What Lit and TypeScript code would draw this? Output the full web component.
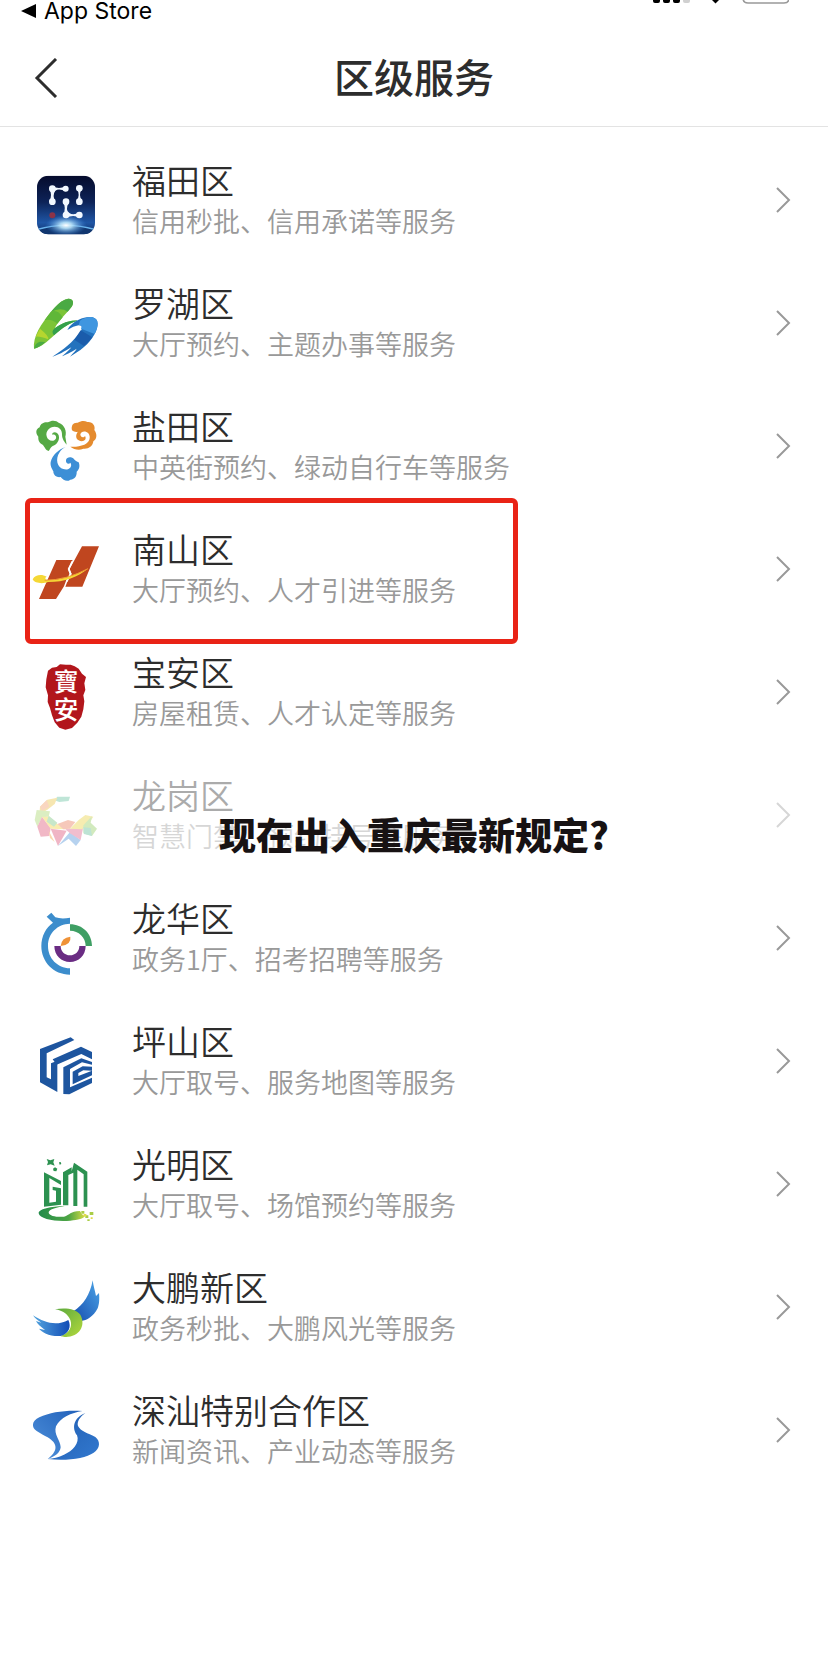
import { LitElement, html, css, svg, nothing } from "lit";
import { customElement, property } from "lit/decorators.js";
import { classMap } from "lit/directives/class-map.js";

interface District {
  name: string;
  detail: string;
  viewBox: string;
  art: unknown;
  marked?: boolean;
  notice?: string;
}

const districts: District[] = [
  {
    name: "福田区",
    detail: "信用秒批、信用承诺等服务",
    viewBox: "39 36 198 198",
    art: svg`
      <defs>
        <linearGradient id="night" x1="0" y1="0" x2="0" y2="1">
          <stop offset="0" stop-color="#050b2c"/><stop offset=".45" stop-color="#0d2358"/>
          <stop offset=".8" stop-color="#1f56a5"/><stop offset="1" stop-color="#0f2f68"/>
        </linearGradient>
        <radialGradient id="glow" cx="138" cy="196" r="62" gradientUnits="userSpaceOnUse" gradientTransform="translate(0 98) scale(1 .5)">
          <stop offset="0" stop-color="#fff"/><stop offset=".3" stop-color="#b8e4fb" stop-opacity=".9"/>
          <stop offset="1" stop-color="#3b8ae0" stop-opacity="0"/>
        </radialGradient>
        <clipPath id="tile"><rect x="51" y="47" width="174" height="176" rx="34"/></clipPath>
      </defs>
      <g clip-path="url(#tile)">
        <rect x="51" y="47" width="174" height="176" fill="url(#night)"/>
        <ellipse cx="138" cy="246" rx="130" ry="50" fill="#11366f"/>
        <path d="M40 212Q138 180 236 212" fill="none" stroke="#69b4ee" stroke-width="4"/>
        <rect x="60" y="150" width="160" height="73" fill="url(#glow)"/>
      </g>
      <g fill="#f2f8ff">
        <circle cx="97" cy="86" r="10"/><circle cx="137" cy="86" r="9"/><circle cx="97" cy="125" r="10"/>
        <circle cx="178" cy="85" r="10"/><circle cx="178" cy="125" r="10"/>
        <circle cx="138" cy="125" r="10"/><circle cx="138" cy="165" r="10"/><circle cx="178" cy="165" r="10"/>
        <path d="M97 78Q117 90 137 78V94Q117 84 106 92Q96 105 106 125H88Q98 105 88 86ZM169 85H187Q173 105 187 125H169Q183 105 169 85ZM129 125H147Q135 150 147 158Q160 168 178 157V173Q158 162 138 175L129 165Q140 145 129 125Z"/>
      </g>
      <circle cx="97" cy="166" r="9" fill="#8c3348"/>`,
  },
  {
    name: "罗湖区",
    detail: "大厅预约、主题办事等服务",
    viewBox: "39 405 198 198",
    art: svg`
      <path d="M42 566C38 530 62 492 96 452C112 434 126 420 142 417C158 414 164 428 155 440C140 459 112 486 104 505C116 498 140 480 172 482C136 494 118 512 100 528C82 544 64 562 42 566Z" fill="#7cc437"/>
      <path d="M92 456C112 434 126 420 142 417C158 414 164 428 155 440L143 455Q122 440 92 456Z" fill="#4aaa43"/>
      <path d="M74 480L92 456Q112 445 128 472L112 491Q96 476 74 480Z" fill="#5fb738"/>
      <path d="M47 530L60 506Q90 530 84 538Q60 528 47 530Z" fill="#b5d62f"/>
      <path d="M42 566Q44 550 60 545L76 546Q60 562 42 566Z" fill="#4aaa43"/>
      <path d="M104 505C116 498 140 480 172 482C136 494 118 512 102 526Q92 516 104 505Z" fill="#33a04c"/>
      <path d="M148 500C166 480 196 467 218 472C238 477 236 500 224 522C207 554 178 574 150 590C160 578 168 572 170 566C150 578 138 584 126 589C140 577 150 568 154 562C134 574 114 586 97 590C130 570 160 544 178 520C190 503 188 494 176 496C164 498 156 502 142 510Z" fill="#2372bd"/>
      <path d="M180 482C194 473 208 469 218 472C238 477 236 500 224 522L183 506Q188 496 176 496Z" fill="#3f96e0"/>
      <path d="M182 511L217 532Q205 548 192 558L163 539Z" fill="#1a5cab"/>`,
  },
  {
    name: "盐田区",
    detail: "中英街预约、绿动自行车等服务",
    viewBox: "39 54 198 198",
    art: svg`
      <path d="M86 153C76 150 74 140 68 134C57 129 54 119 55 110C46 100 47 87 59 82C62 68 76 65 84 67C96 59 110 62 116 68C134 74 141 94 136 110L140 134C134 127 126 116 126 104C127 89 117 80 104 80C88 80 76 94 80 109C83 123 100 127 107 117C112 108 103 101 96 104C98 93 112 95 116 106C121 122 108 136 98 138C92 141 90 148 86 153Z" fill="#55a944"/>
      <path d="M156 91C153 76 159 67 173 68C184 62 194 62 202 66C218 64 227 78 223 90C232 102 231 117 220 124C218 140 204 148 190 146C176 152 162 148 151 140C166 142 180 138 193 134C208 128 214 112 205 100C197 91 183 93 181 103C181 113 192 114 195 108C202 120 188 128 176 121C165 115 168 101 174 95C167 97 162 95 156 91Z" fill="#e58b2e"/>
      <path d="M137 141C116 148 97 165 92 186C90 199 97 207 100 214C100 228 112 233 122 231C130 242 142 246 151 239C166 238 171 225 170 215C179 208 180 196 176 187C171 184 165 182 161 176C156 170 140 169 138 180C136 190 147 195 151 188C159 199 147 211 133 208C110 203 106 176 118 158C123 150 129 145 137 141Z" fill="#3d8fd6"/>`,
  },
  {
    name: "南山区",
    detail: "大厅预约、人才引进等服务",
    viewBox: "39 423 198 198",
    marked: true,
    art: svg`
      <path d="M109 480H158L144 507L149 522L139 540L132 559L108 597H57Z" fill="#c0461f"/>
      <path d="M186 439H237L187 560H136L148 530L155 522L149 507Z" fill="#c0461f"/>
      <path d="M157 484L146 507L152 522L140 545" fill="none" stroke="#fff" stroke-width="5"/>
      <path d="M38 538C46 524 65 522 80 530C72 534 78 540 84 540C135 538 165 524 204 506C174 530 135 546 84 546C70 552 44 551 38 538Z" fill="#f5d836"/>
      <path d="M74 541Q140 540 204 506" fill="none" stroke="#f09a35" stroke-width="3"/>`,
  },
  {
    name: "宝安区",
    detail: "房屋租赁、人才认定等服务",
    viewBox: "39 72 198 198",
    art: svg`
      <path d="M84 92L96 83L110 81L120 73L138 74L152 74L164 79L176 86L186 101L198 111L193 130L196 150L190 166L193 184L190 208L184 230L172 248L156 264L136 269L118 263L104 247L96 226L90 204L83 186L84 166L77 142L79 118Z" fill="#b2161c"/>
      <g class="seal"><text x="138" y="152">寶</text><text x="138" y="236">安</text></g>`,
  },
  {
    name: "龙岗区",
    detail: "智慧门禁、预约挂号等服务",
    viewBox: "39 441 198 198",
    notice: "现在出入重庆最新规定?",
    art: svg`
      <path d="M103 481L112 470L150 470L146 483L118 486Z" fill="#5fbf9b"/>
      <path d="M60 500L82 479L112 473L104 492L84 508L58 524Z" fill="#e8c13c"/>
      <path d="M60 500L80 480L88 500L66 514Z" fill="#ef9a62"/>
      <path d="M44 540L50 510L72 512L90 514L86 530L66 532L52 560Z" fill="#a5d468"/>
      <path d="M52 560L66 530L92 564L88 588L62 590Z" fill="#dc4f72"/>
      <path d="M66 530L88 530L112 552L136 568L92 566Z" fill="#f0cf39"/>
      <path d="M86 527L112 548L102 560L80 545Z" fill="#73c27a"/>
      <path d="M92 566L140 572L114 618Z" fill="#d9486e"/>
      <path d="M86 572L104 606L90 594Z" fill="#f0a03c"/>
      <path d="M114 618L150 576L182 600L168 618L146 596Z" fill="#4a8fd6"/>
      <path d="M136 568L190 560L182 600L150 580Z" fill="#dd5c86"/>
      <path d="M112 552L144 540L166 546L150 566L130 568Z" fill="#e87754"/>
      <path d="M150 566L176 540L196 525L220 530L206 552L186 568Z" fill="#e9cf3e"/>
      <path d="M190 556L216 528L212 548L231 566L216 588L190 580Z" fill="#8fcb5c"/>
      <path d="M190 562L212 564L216 588L192 582Z" fill="#5bb894"/>`,
  },
  {
    name: "龙华区",
    detail: "政务1厅、招考招聘等服务",
    viewBox: "39 60 198 198",
    art: svg`
      <path d="M80 80L94 68L106 82Q125 88 150 83V101C112 102 84 130 84 168C84 205 112 234 150 235V254C100 254 64 215 64 168C64 138 78 112 99 98Z" fill="#3c8dcc"/>
      <path d="M150 103C188 103 216 132 216 168H197C197 142 176 122 150 122Z" fill="#3f9f64"/>
      <path d="M103 168H122C122 184 134 196 150 196C166 196 178 184 178 168H197C197 196 176 216 150 216C124 216 103 196 103 168Z" fill="#6a2c83"/>
      <path d="M122 168Q124 143 151 140Q155 164 122 168Z" fill="#ef9237"/>`,
  },
  {
    name: "坪山区",
    detail: "大厅取号、服务地图等服务",
    viewBox: "39 429 198 198",
    art: svg`
      <g fill="#1d559f">
        <path d="M60 477L152 442L163 450L80 490V562L93 568V520L112 512V606L60 577Z"/>
        <path d="M98 508L183 470L216 486V508L184 492L110 524Z"/>
        <path d="M130 532L184 505L216 516V524L186 517L150 537V592L216 563V579L148 613L130 612Z"/>
        <path d="M158 545L188 529L216 530V542L190 541L175 549V558L216 542V556L158 583Z"/>
      </g>`,
  },
  {
    name: "光明区",
    detail: "大厅取号、场馆预约等服务",
    viewBox: "39 48 198 198",
    art: svg`
      <defs><linearGradient id="lawn"><stop offset="0" stop-color="#238b4b"/><stop offset=".65" stop-color="#4da544"/><stop offset="1" stop-color="#d5db43"/></linearGradient></defs>
      <g fill="#2c9150">
        <path d="M72 97L123 123V135L88 114V188L108 185V152L98 150V140L123 145V194L72 200Z"/>
        <path d="M129 97L155 82V94L162 68L202 95V200H191V103L172 89V198H160V98L145 105V196H129Z"/>
        <path d="M80 57L91 61L103 57L100 67L104 77L92 73L81 76L84 66Z"/>
        <path d="M99 86L105 82L112 86L109 94L101 93ZM117 67L122 66L124 72L119 74Z"/>
      </g>
      <path d="M134 198C108 198 55 204 56 220C58 238 110 246 151 242C175 240 190 236 195 229L186 223L180 213C150 214 150 225 132 230C112 232 88 228 86 218C85 207 114 202 134 198Z" fill="url(#lawn)"/>
      <path d="M184 213h9v8h-9zM196 226h9v8h-9zM209 216h11v9h-11zM202 238h7v5h-7z" fill="#a9cd45"/>
      <path d="M191 222h8v7h-8zM212 232h6v5h-6z" fill="#e1d94c"/>`,
  },
  {
    name: "大鹏新区",
    detail: "政务秒批、大鹏风光等服务",
    viewBox: "39 417 198 198",
    art: svg`
      <defs>
        <linearGradient id="wing" x1="0" y1="1" x2="1" y2="0"><stop offset="0" stop-color="#174eaf"/><stop offset="1" stop-color="#4ba4e7"/></linearGradient>
        <linearGradient id="leaf" x1="0" y1="0" x2="1" y2="1"><stop offset="0" stop-color="#5aa83e"/><stop offset="1" stop-color="#b3d93c"/></linearGradient>
        <linearGradient id="tail"><stop offset="0" stop-color="#54a6df"/><stop offset="1" stop-color="#124cb6"/></linearGradient>
      </defs>
      <path d="M218 421C220 438 225 452 228 468L237 459C239 480 237 494 233 505C220 530 200 542 184 543C181 528 172 518 160 514C190 496 211 462 218 421Z" fill="url(#wing)"/>
      <path d="M105 508C132 502 168 505 181 524C196 550 185 586 144 590C132 592 125 590 122 588C148 580 158 560 151 540C144 524 130 512 105 508Z" fill="url(#leaf)"/>
      <path d="M39 526C74 549 110 559 145 540C155 560 146 582 122 588C88 590 66 577 57 566L75 570C62 560 51 551 48 543L64 548C52 540 44 534 39 526Z" fill="url(#tail)"/>`,
  },
  {
    name: "深汕特别合作区",
    detail: "新闻资讯、产业动态等服务",
    viewBox: "39 36 198 198",
    art: svg`
      <defs>
        <linearGradient id="crest" x1="1" y1="0" x2="0" y2="1"><stop offset="0" stop-color="#1f5fb9"/><stop offset="1" stop-color="#5193dc"/></linearGradient>
        <linearGradient id="river" x1="0" y1="0" x2="1" y2="1"><stop offset="0" stop-color="#205cb0"/><stop offset="1" stop-color="#3279cf"/></linearGradient>
      </defs>
      <path d="M187 63C138 60 92 66 58 82C34 93 34 113 50 123C73 138 97 146 104 162C112 178 100 194 83 207C106 200 120 188 122 172C122 152 100 134 108 109C121 82 154 69 187 63Z" fill="url(#crest)"/>
      <path d="M196 69C160 83 155 114 171 136C180 158 158 184 132 194C116 202 99 205 83 207C139 213 196 206 221 188C241 176 242 153 226 141C203 129 182 124 174 108C170 95 180 81 196 69Z" fill="url(#river)"/>`,
  },
];

@customElement("district-row")
class DistrictRow extends LitElement {
  @property({ attribute: false }) district!: District;

  static styles = css`
    :host { display: block; }
    .row {
      position: relative;
      display: flex;
      align-items: center;
      gap: 33px;
      padding: 20px 37px 21px 33px;
      color: inherit;
      text-decoration: none;
    }
    .marked::before {
      content: "";
      position: absolute;
      top: -10px;
      bottom: -13px;
      left: 25px;
      width: 493px;
      box-sizing: border-box;
      border: 5px solid #e92316;
      border-radius: 6px;
    }
    .logo { flex: none; width: 66px; height: 66px; margin-top: 10px; overflow: visible; }
    .seal {
      font: 500 74px "Noto Sans CJK TC", sans-serif;
      fill: #fff;
      text-anchor: middle;
    }
    .text { flex: 1; min-width: 0; }
    .name { display: block; font-size: 34px; line-height: 42px; color: #2d2d2d; }
    .detail { display: block; font-size: 27px; line-height: 40px; color: #999; }
    .light { font-weight: 350; }
    .arrow { flex: none; width: 15px; height: 26px; }
    .notice {
      position: absolute;
      inset: 18px 0 -18px;
      display: flex;
      align-items: center;
      justify-content: center;
      background: rgb(255 255 255 / 60%);
      font-size: 37px;
      font-weight: 900;
      color: #171213;
    }
  `;

  render() {
    const d = this.district;
    return html`
      <a href="#" class=${classMap({ row: true, marked: !!d.marked })}>
        <svg class="logo" viewBox=${d.viewBox} aria-hidden="true">${d.art}</svg>
        <span class="text">
          <span class="name light">${d.name}</span>
          <span class="detail light">${d.detail}</span>
        </span>
        <svg class="arrow" viewBox="0 0 15 26" fill="none" stroke="#999" stroke-width="2" aria-hidden="true">
          <path d="M1 1L13 13L1 25"/>
        </svg>
        ${d.notice ? html`<strong class="notice">${d.notice}</strong>` : nothing}
      </a>`;
  }
}

@customElement("app-root")
class AppRoot extends LitElement {
  static styles = css`
    :host {
      display: block;
      min-height: 100vh;
      background: #fff;
      font-family: "Noto Sans CJK SC", sans-serif;
    }
    .status {
      display: flex;
      justify-content: space-between;
      align-items: flex-start;
      height: 30px;
      padding: 0 39px 0 21px;
      box-sizing: border-box;
    }
    .origin {
      display: flex;
      align-items: center;
      gap: 8px;
      font: 400 23px/22px Inter, sans-serif;
      color: #000;
      text-decoration: none;
    }
    .triangle { width: 15px; height: 14px; }
    .signals { width: 136px; height: 5px; }
    .header {
      display: grid;
      grid-template-columns: 1fr auto 1fr;
      align-items: center;
      height: 97px;
      box-sizing: border-box;
      padding: 0 34px;
      border-bottom: 1px solid #e3e3e3;
    }
    .back {
      justify-self: start;
      display: flex;
      padding: 0;
      border: 0;
      background: none;
    }
    .back-icon { width: 24px; height: 40px; }
    .title { margin: 0; padding-bottom: 4px; font-size: 40px; font-weight: 500; line-height: 56px; color: #2d2d2d; }
    .list { list-style: none; margin: 0; padding: 12px 0; }
  `;

  render() {
    return html`
      <div class="status">
        <a class="origin" href="#">
          <svg class="triangle" viewBox="0 0 15 14" aria-hidden="true"><path d="M0 7L15 0V14Z"/></svg>
          App Store
        </a>
        <svg class="signals" viewBox="0 0 136 5" aria-hidden="true">
          <path d="M0 0h7v1q0 2-2 2h-3q-2 0-2-2zM10 0h7v1q0 2-2 2h-3q-2 0-2-2zM20 0h7v1q0 2-2 2h-3q-2 0-2-2z"/>
          <path d="M30 0h7v1q0 2-2 2h-3q-2 0-2-2z" fill="#d0d0d0"/>
          <path d="M59 0h7l-3.500 3.500z"/>
          <path d="M90 -2q0 5 5 5h36q5 0 5-5" fill="none" stroke="#999" stroke-width="1.500"/>
        </svg>
      </div>
      <header class="header">
        <button class="back" aria-label="返回">
          <svg class="back-icon" viewBox="0 0 24 40" fill="none" stroke="#2d2d2d" stroke-width="3" aria-hidden="true">
            <path d="M22 1L3 20L22 39"/>
          </svg>
        </button>
        <h1 class="title">区级服务</h1>
      </header>
      <ul class="list">
        ${districts.map((d) => html`<li><district-row .district=${d}></district-row></li>`)}
      </ul>`;
  }
}
